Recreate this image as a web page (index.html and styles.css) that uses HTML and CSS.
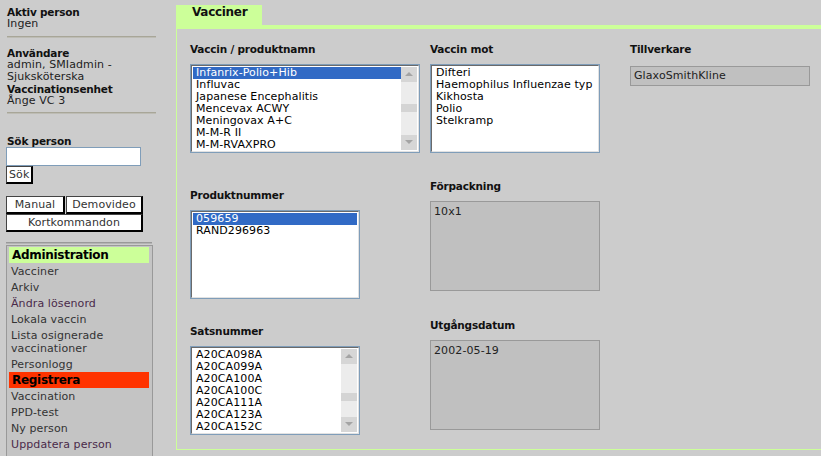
FILE: index.html
```html
<!DOCTYPE html>
<html lang="sv">
<head>
    <meta charset="UTF-8">
    <title>Vacciner</title>
    <link rel="stylesheet" href="styles.css">
</head>
<body>
    <div class="page">
        <div class="sidebar">
            <div class="info first">
                <b>Aktiv person</b><br>
                Ingen
            </div>
            <hr class="rule">
            <div class="info second">
                <b>Användare</b><br>
                admin, SMIadmin -<br>
                Sjuksköterska<br>
                <b>Vaccinationsenhet</b><br>
                Ånge VC 3
            </div>
            <hr class="rule">

            <div class="search">
                <label for="q">Sök person</label>
                <input type="text" id="q">
                <button class="btn">Sök</button>
            </div>

            <div class="links">
                <button class="btn">Manual</button>
                <button class="btn">Demovideo</button>
                <button class="btn wide">Kortkommandon</button>
            </div>
            <hr class="rule dark">

            <div class="menu">
                <div class="menu-head admin">Administration</div>
                <a href="#">Vacciner</a>
                <a href="#">Arkiv</a>
                <a href="#" class="visited">Ändra lösenord</a>
                <a href="#">Lokala vaccin</a>
                <a href="#">Lista osignerade vaccinationer</a>
                <a href="#">Personlogg</a>
                <div class="menu-head reg">Registrera</div>
                <a href="#">Vaccination</a>
                <a href="#">PPD-test</a>
                <a href="#">Ny person</a>
                <a href="#" class="visited">Uppdatera person</a>
                <a href="#">Avliden person</a>
            </div>
        </div>

        <div class="main">
            <div class="tab">Vacciner</div>
            <div class="panel">
                <!-- kolumn 1 -->
                <div class="col col-1">
                    <div class="field">
                        <label>Vaccin / produktnamn</label>
                        <div class="listbox">
                            <div class="lb-inner">
                                <div class="items">
                                    <div class="item selected">Infanrix-Polio+Hib</div>
                                    <div class="item">Influvac</div>
                                    <div class="item">Japanese Encephalitis</div>
                                    <div class="item">Mencevax ACWY</div>
                                    <div class="item">Meningovax A+C</div>
                                    <div class="item">M-M-R II</div>
                                    <div class="item">M-M-RVAXPRO</div>
                                </div>
                                <div class="scrollbar">
                                    <span class="sb-btn up"></span>
                                    <span class="sb-track"><span class="sb-thumb" style="margin-top: 22px"></span></span>
                                    <span class="sb-btn down"></span>
                                </div>
                            </div>
                        </div>
                    </div>

                    <div class="field f-prod">
                        <label>Produktnummer</label>
                        <div class="listbox narrow">
                            <div class="lb-inner">
                                <div class="items">
                                    <div class="item selected">059659</div>
                                    <div class="item">RAND296963</div>
                                </div>
                            </div>
                        </div>
                    </div>

                    <div class="field f-sats">
                        <label>Satsnummer</label>
                        <div class="listbox narrow">
                            <div class="lb-inner">
                                <div class="items">
                                    <div class="item">A20CA098A</div>
                                    <div class="item">A20CA099A</div>
                                    <div class="item">A20CA100A</div>
                                    <div class="item">A20CA100C</div>
                                    <div class="item">A20CA111A</div>
                                    <div class="item">A20CA123A</div>
                                    <div class="item">A20CA152C</div>
                                </div>
                                <div class="scrollbar">
                                    <span class="sb-btn up"></span>
                                    <span class="sb-track"><span class="sb-thumb" style="margin-top: 29px"></span></span>
                                    <span class="sb-btn down"></span>
                                </div>
                            </div>
                        </div>
                    </div>
                </div>

                <!-- kolumn 2 -->
                <div class="col col-2">
                    <div class="field">
                        <label>Vaccin mot</label>
                        <div class="listbox narrow">
                            <div class="lb-inner">
                                <div class="items">
                                    <div class="item">Difteri</div>
                                    <div class="item">Haemophilus Influenzae typ</div>
                                    <div class="item">Kikhosta</div>
                                    <div class="item">Polio</div>
                                    <div class="item">Stelkramp</div>
                                </div>
                            </div>
                        </div>
                    </div>

                    <div class="field f-pack">
                        <label>Förpackning</label>
                        <div class="ro-box">10x1</div>
                    </div>

                    <div class="field f-date">
                        <label>Utgångsdatum</label>
                        <div class="ro-box">2002-05-19</div>
                    </div>
                </div>

                <!-- kolumn 3 -->
                <div class="col col-3">
                    <div class="field">
                        <label class="gap">Tillverkare</label>
                        <div class="ro-line">GlaxoSmithKline</div>
                    </div>
                </div>
            </div>
        </div>
    </div>
</body>
</html>
```

FILE: styles.css
```css
* {
    box-sizing: border-box;
}

html, body {
    margin: 0;
    height: 456px;
    overflow: hidden;
}

body {
    background: #cccccc;
    font-family: "DejaVu Sans", Verdana, sans-serif;
    font-size: 11px;
    line-height: 12px;
    letter-spacing: 0.1px;
    color: #222;
}

.page {
    display: flex;
    align-items: flex-start;
}

/* ---------- vänsterspalt ---------- */

.sidebar {
    flex: none;
    width: 156px;
    padding: 6px 0 0 6px;
}

.info {
    padding-left: 1px;
}

.info b,
.search label,
.field label {
    font-size: 10.5px;
    font-weight: bold;
    letter-spacing: -0.2px;
    color: #111;
}

/* mindre fet text får inte göra raden högre */
.info b {
    line-height: 12px;
    vertical-align: top;
}

.info.second {
    margin-top: 9px;
}

.rule {
    height: 0;
    margin: 6px 0 0 1px;
    border: 0;
    border-top: 1px solid #a8a698;
    border-bottom: 1px solid #bdbcb4;
}

.info.second + .rule {
    margin-top: 5px;
}

.rule.dark {
    width: 146px;
    margin: 10px 0 0 0;
    border-top: 1px solid #999;
    border-bottom: 1px solid #b4b4b4;
}

.search {
    margin-top: 21px;
}

.search label {
    display: block;
    padding-left: 1px;
}

.search input {
    display: block;
    width: 135px;
    height: 19px;
    margin: 0;
    border: 1px solid #7f9db9;
    background: #fff;
}

.btn {
    height: 18px;
    margin: 0;
    padding: 0 2px;
    background: #fff;
    color: #333;
    font-family: inherit;
    font-size: 11px;
    letter-spacing: 0.1px;
    line-height: 14px;
    border-style: solid;
    border-width: 1px 2px 2px 1px;
    border-color: #444 #000 #000 #444;
}

.links {
    display: grid;
    grid-template-columns: 59px 77px;
    column-gap: 1px;
    margin-top: 12px;
    width: 137px;
}

.links .wide {
    grid-column: span 2;
}

.menu {
    width: 147px;
    margin-top: 1px;
    padding: 1px 3px 0 2px;
    background: #c4c4c4;
    border: 1px solid #999;
}

.menu-head {
    height: 16px;
    padding-left: 3px;
    font-size: 12px;
    font-weight: bold;
    letter-spacing: -0.3px;
    line-height: 16px;
    color: #000;
}

.menu-head.admin {
    background: #ccff99;
}

.menu-head.reg {
    background: #ff3300;
}

.menu a {
    display: block;
    padding: 2px 0 1px 2px;
    line-height: 13px;
    color: #333;
    text-decoration: none;
}

.menu a.visited {
    color: #4a2a4a;
}

/* ---------- innehåll ---------- */

.main {
    flex: none;
    width: 660px;
    margin-left: 20px;
    padding-top: 5px;
}

.tab {
    width: 86px;
    height: 20px;
    padding-left: 16px;
    background: #ccff99;
    font-size: 12px;
    font-weight: bold;
    letter-spacing: -0.3px;
    line-height: 14px;
    color: #111;
}

.panel {
    display: flex;
    align-items: flex-start;
    padding: 14px 0 14px 13px;
    border: 1px solid #ccff99;
    border-top-width: 4px;
}

.col-1 {
    width: 230px;
    margin-right: 10px;
}

.col-2 {
    width: 170px;
    margin-right: 30px;
}

.col-3 {
    width: 180px;
}

.field label {
    display: block;
    margin-bottom: 8px;
    line-height: 13px;
}

.field label.gap {
    margin-bottom: 10px;
}

.f-prod { margin-top: 36px; }
.f-sats { margin-top: 26px; }
.f-pack { margin-top: 27px; }
.f-date { margin-top: 28px; }

.listbox {
    width: 230px;
    height: 89px;
    border: 1px solid #7f9db9;
}

.listbox.narrow {
    width: 170px;
}

.lb-inner {
    display: flex;
    height: 87px;
    padding: 1px;
    background: #fff;
    border-style: solid;
    border-width: 1px;
    border-color: #6a6a6a #e2e2e2 #e2e2e2 #6a6a6a;
}

.items {
    flex: 1;
    overflow: hidden;
    color: #000;
}

.item {
    height: 12px;
    padding-left: 3px;
    line-height: 12px;
    white-space: nowrap;
}

.item.selected {
    background: #316ac5;
    color: #fff;
}

.scrollbar {
    display: flex;
    flex-direction: column;
    width: 16px;
    background: #ececec;
}

.sb-btn {
    position: relative;
    height: 15px;
    background: #d6d6d6;
}

.sb-btn::after {
    content: "";
    position: absolute;
    left: 4px;
    top: 5px;
    border-left: 4px solid transparent;
    border-right: 4px solid transparent;
}

.sb-btn.up::after {
    border-bottom: 4px solid #a4a4a4;
}

.sb-btn.down::after {
    border-top: 4px solid #a4a4a4;
}

.sb-track {
    flex: 1;
}

.sb-thumb {
    display: block;
    height: 8px;
    background: #d4d4d4;
}

.ro-box {
    height: 90px;
    padding: 4px 3px;
    background: #c0c0c0;
    border: 1px solid #999;
    color: #222;
}

.ro-line {
    height: 20px;
    padding: 3px 3px;
    background: #c0c0c0;
    border: 1px solid #999;
    color: #222;
}
```
